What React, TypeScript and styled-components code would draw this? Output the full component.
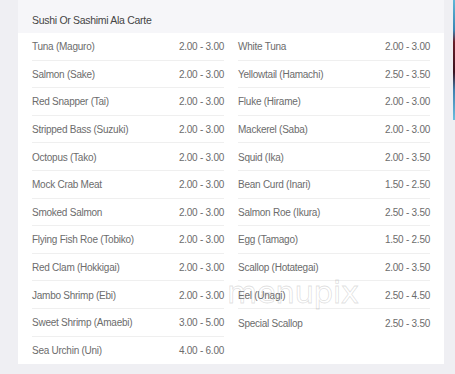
import styled, { createGlobalStyle } from "styled-components";

type Item = { name: string; price: string };

const leftItems: Item[] = [
  { name: "Tuna (Maguro)", price: "2.00 - 3.00" },
  { name: "Salmon (Sake)", price: "2.00 - 3.00" },
  { name: "Red Snapper (Tai)", price: "2.00 - 3.00" },
  { name: "Stripped Bass (Suzuki)", price: "2.00 - 3.00" },
  { name: "Octopus (Tako)", price: "2.00 - 3.00" },
  { name: "Mock Crab Meat", price: "2.00 - 3.00" },
  { name: "Smoked Salmon", price: "2.00 - 3.00" },
  { name: "Flying Fish Roe (Tobiko)", price: "2.00 - 3.00" },
  { name: "Red Clam (Hokkigai)", price: "2.00 - 3.00" },
  { name: "Jambo Shrimp (Ebi)", price: "2.00 - 3.00" },
  { name: "Sweet Shrimp (Amaebi)", price: "3.00 - 5.00" },
  { name: "Sea Urchin (Uni)", price: "4.00 - 6.00" },
];

const rightItems: Item[] = [
  { name: "White Tuna", price: "2.00 - 3.00" },
  { name: "Yellowtail (Hamachi)", price: "2.50 - 3.50" },
  { name: "Fluke (Hirame)", price: "2.00 - 3.00" },
  { name: "Mackerel (Saba)", price: "2.00 - 3.00" },
  { name: "Squid (Ika)", price: "2.00 - 3.50" },
  { name: "Bean Curd (Inari)", price: "1.50 - 2.50" },
  { name: "Salmon Roe (Ikura)", price: "2.50 - 3.50" },
  { name: "Egg (Tamago)", price: "1.50 - 2.50" },
  { name: "Scallop (Hotategai)", price: "2.00 - 3.50" },
  { name: "Eel (Unagi)", price: "2.50 - 4.50" },
  { name: "Special Scallop", price: "2.50 - 3.50" },
];

const GlobalStyle = createGlobalStyle`
  html, body {
    margin: 0;
    padding: 0;
    background: #efeff3;
  }
  body {
    font-family: "Liberation Sans", Arial, sans-serif;
  }
`;

const Page = styled.div`
  display: flex;
  width: 455px;
  height: 374px;
  overflow: hidden;
  background: #efeff3;
`;

const Gutter = styled.div`
  width: 18px;
  flex-shrink: 0;
`;

const Card = styled.section`
  position: relative;
  width: 426px;
  flex-shrink: 0;
  display: flex;
  flex-direction: column;
`;

const Header = styled.h3`
  margin: 0;
  height: 33px;
  padding: 6px 14px 0;
  display: flex;
  align-items: center;
  box-sizing: border-box;
  background: #f6f6f9;
  color: #454545;
  font-size: 10.5px;
  font-weight: normal;
  letter-spacing: -0.3px;
`;

const Body = styled.div`
  background: #ffffff;
  display: grid;
  grid-template-columns: 192px 192px;
  column-gap: 14px;
  padding: 0 14px;
  height: 331px;
  box-sizing: border-box;
`;

const Column = styled.ul`
  list-style: none;
  margin: 0;
  padding: 0;
`;

const Row = styled.li`
  height: 27.6px;
  box-sizing: border-box;
  display: flex;
  align-items: center;
  justify-content: space-between;
  border-bottom: 1px solid #efefef;
  color: #6c6c6c;
  font-size: 10px;
  letter-spacing: -0.25px;
  padding-top: 1px;

  &:last-child {
    border-bottom: none;
  }
`;

const Price = styled.span`
  color: #6c6c6c;
`;

// site watermark laid over the list
const Watermark = styled.div`
  position: absolute;
  left: 209px;
  top: 274px;
  font-family: "DejaVu Sans", sans-serif;
  font-size: 31px;
  letter-spacing: -0.5px;
  color: transparent;
  -webkit-text-stroke: 0.8px rgba(150, 150, 150, 0.3);
  pointer-events: none;
`;

const SideGap = styled.div`
  flex: 1;
  display: flex;
  justify-content: flex-end;
`;

const Strip = styled.div`
  width: 2px;
  height: 120px;
  background: linear-gradient(
    to bottom,
    #5fb6d6 0%,
    #3a86b4 25%,
    #6a1f2a 35%,
    #3b1420 60%,
    #3f7fae 75%,
    #6bbfe0 100%
  );
`;

const MenuColumn = ({ items }: { items: Item[] }) => (
  <Column>
    {items.map((item) => (
      <Row key={item.name}>
        <span>{item.name}</span>
        <Price>{item.price}</Price>
      </Row>
    ))}
  </Column>
);

export default function App() {
  return (
    <>
      <GlobalStyle />
      <Page>
        <Gutter />
        <Card>
          <Header>Sushi Or Sashimi Ala Carte</Header>
          <Body>
            <MenuColumn items={leftItems} />
            <MenuColumn items={rightItems} />
          </Body>
          <Watermark>menupix</Watermark>
        </Card>
        <SideGap>
          <Strip />
        </SideGap>
      </Page>
    </>
  );
}
